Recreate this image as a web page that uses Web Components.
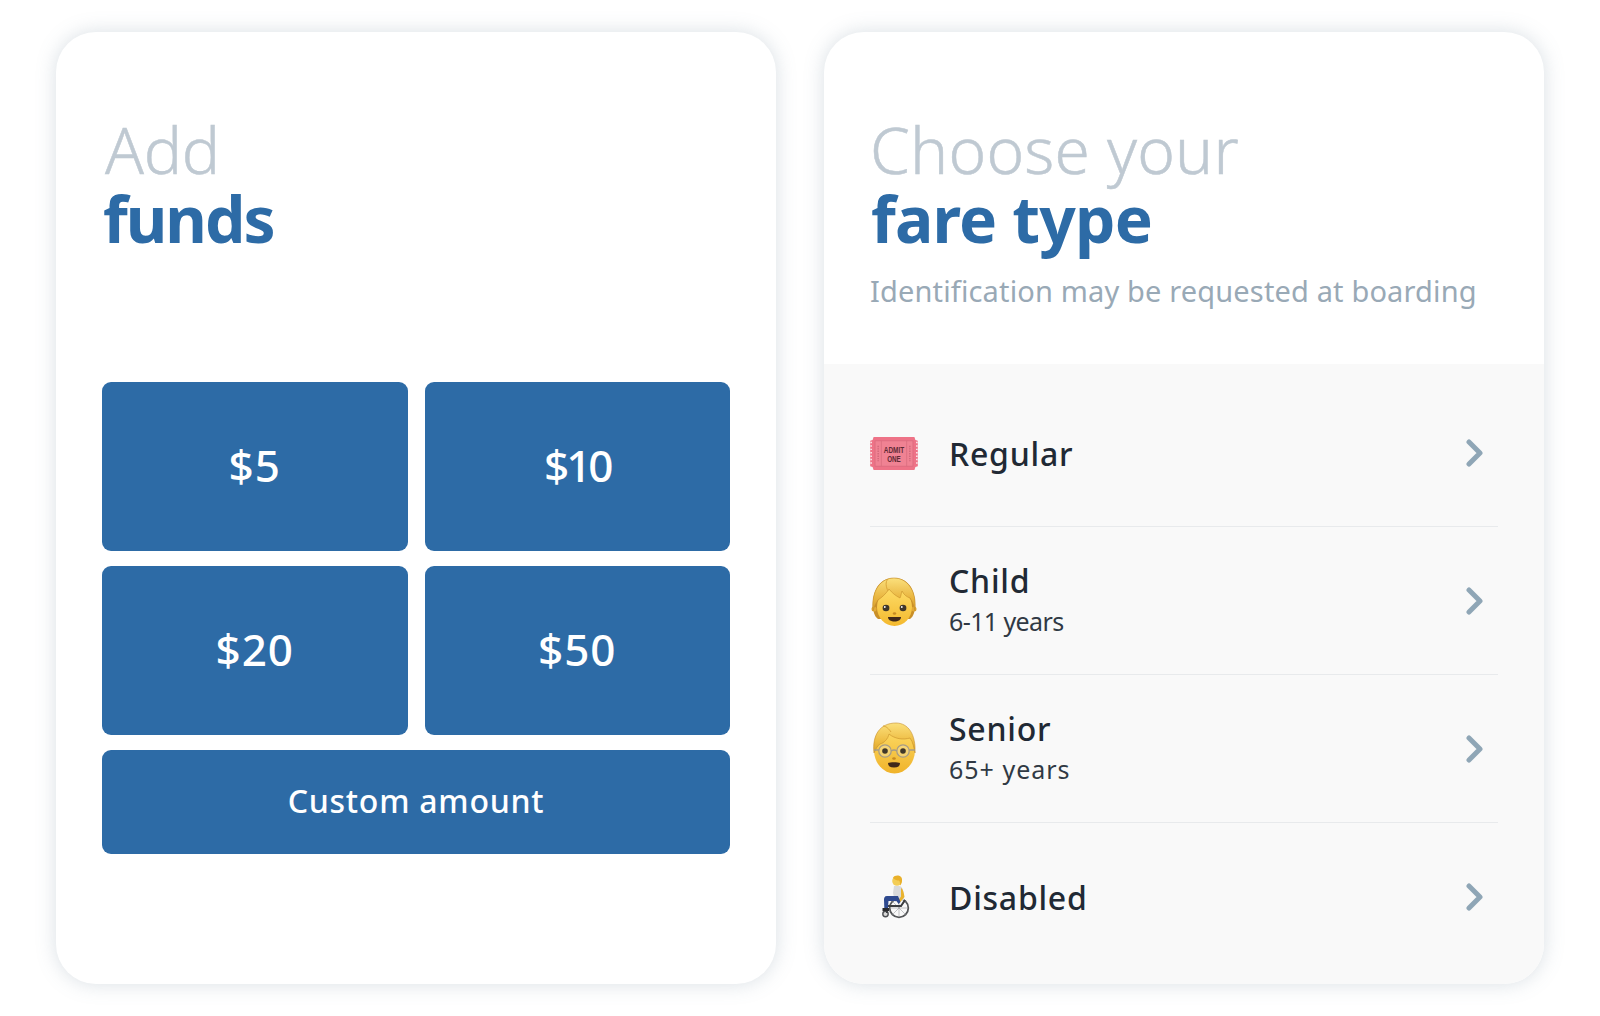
<!DOCTYPE html>
<html><head><meta charset="utf-8"><style>
html,body{margin:0;background:#fff}
body{font-family:"Noto Sans","Open Sans",sans-serif}
</style></head><body>
<fare-app>
<fare-card>
  <fare-title light="Add" bold="funds" lw="-0.2" bw="-2" li="3" bi="1"></fare-title>
  <fund-grid>
    <fund-btn>$5</fund-btn><fund-btn style="letter-spacing:-3px">$10</fund-btn><fund-btn>$20</fund-btn><fund-btn>$50</fund-btn>
    <fund-btn wide>Custom amount</fund-btn>
  </fund-grid>
</fare-card>
<fare-card>
  <fare-title light="Choose your" bold="fare type" sub="Identification may be requested at boarding" lw="0.2" bw="-0.8" bi="1"></fare-title>
  <fare-list>
    <fare-row label="Regular"><fare-icon kind="ticket"></fare-icon></fare-row>
    <fare-row label="Child" sub="6-11 years" subls="-0.6"><fare-icon kind="child"></fare-icon></fare-row>
    <fare-row label="Senior" sub="65+ years" subls="1"><fare-icon kind="senior"></fare-icon></fare-row>
    <fare-row label="Disabled" last><fare-icon kind="chair"></fare-icon></fare-row>
  </fare-list>
</fare-card>
</fare-app>
<script>
function def(name,css,html){
  customElements.define(name,class extends HTMLElement{
    connectedCallback(){
      if(this.shadowRoot)return;
      const r=this.attachShadow({mode:'open'});
      r.innerHTML='<style>'+css+'</style>'+(typeof html==='function'?html(this):html);
    }
  });
}
def('fare-app',':host{display:flex;gap:48px;padding:32px 56px;box-sizing:border-box;width:1600px;height:1016px}','<slot></slot>');
def('fare-card',':host{flex:1;display:flex;flex-direction:column;background:#fff;border-radius:40px;overflow:hidden;box-shadow:0 0 20px rgba(110,130,150,.26)}','<slot></slot>');
def('fare-title',`:host{display:block;box-sizing:border-box;height:332px;padding:83px 46px 0 46px}
.l,.b{font-size:64px;line-height:69px;white-space:nowrap}
.l{font-weight:300;color:#bfc9d2;-webkit-text-stroke:.5px #bfc9d2}
.b{font-weight:700;color:#2d6ba6}
.s{font-size:29px;line-height:40px;color:#99a9b6;margin-top:18px;white-space:nowrap;letter-spacing:.15px}`,
 h=>`<div class="l" style="letter-spacing:${h.getAttribute('lw')||0}px;padding-left:${h.getAttribute('li')||0}px">${h.getAttribute('light')}</div><div class="b" style="letter-spacing:${h.getAttribute('bw')||0}px;padding-left:${h.getAttribute('bi')||0}px">${h.getAttribute('bold')}</div>`+(h.getAttribute('sub')?`<div class="s">${h.getAttribute('sub')}</div>`:''));
def('fund-grid',':host{display:grid;grid-template-columns:305.5px 305.5px;grid-template-rows:169px 169px 104px;gap:15px 17px;padding:18px 46px 0}','<slot></slot>');
def('fund-btn',`:host{display:flex;align-items:center;justify-content:center;background:#2d6ba6;color:#fff;border-radius:9px;font-size:44px;font-weight:500;padding-bottom:3px;box-sizing:border-box;letter-spacing:1px}
:host([wide]){grid-column:1/3;font-size:32px;letter-spacing:.75px}`,'<slot></slot>');
def('fare-list',':host{flex:1;display:block;background:#f9f9f9;padding:15px 46px 0}','<slot></slot>');
def('fare-row',`:host{display:flex;align-items:center;height:147px;border-bottom:1px solid #e8eaec}
:host([last]){border-bottom:0}
.i{width:48px;height:48px;flex:none;margin-right:31px}
.t{flex:1}
.t.two{margin-top:-2px}
.t.one{padding-top:2px}
.n{font-size:32px;line-height:40px;font-weight:500;color:#212934;letter-spacing:.75px}
.u{font-size:25px;line-height:34px;color:#303944;margin-top:3px}
svg.c{flex:none;margin-right:14px}`,
 h=>`<div class="i"><slot></slot></div><div class="t ${h.getAttribute('sub')?'two':'one'}"><div class="n">${h.getAttribute('label')}</div>${h.getAttribute('sub')?`<div class="u" style="letter-spacing:${h.getAttribute('subls')}px">${h.getAttribute('sub')}</div>`:''}</div><svg class="c" width="18" height="28" viewBox="0 0 18 28"><path d="M3 3l11 11L3 25" fill="none" stroke="#8fa6b6" stroke-width="5" stroke-linecap="round" stroke-linejoin="round"/></svg>`);
const ICONS={
ticket:`<svg viewBox="0 0 50 36" width="50" height="35" style="margin:7px 0 0 -1px"><path d="M4 1h42l1 3 2.500 1v26L47 32l-1 3H4l-1-3-2.500-1V5L3 4z" fill="#ee7387"/><path d="M1.500 6v24M48.500 6v24" stroke="#f9f9f9" stroke-width="1.400" stroke-dasharray="1.500 2"/><rect x="5.500" y="5" width="39" height="26" fill="#f08293" stroke="#d56a7c" stroke-width=".7"/><path d="M12 5v26M38 5v26" stroke="#d56a7c" stroke-width=".7"/><path d="M8.700 10v16M41.300 10v16" stroke="#cd6476" stroke-width="1.300" stroke-dasharray="1.500 1"/><text x="25" y="17" text-anchor="middle" font-family="Liberation Sans" font-size="10" font-weight="700" fill="#5f2a35" textLength="21" lengthAdjust="spacingAndGlyphs">ADMIT</text><text x="25" y="27" text-anchor="middle" font-family="Liberation Sans" font-size="10" font-weight="700" fill="#5f2a35" textLength="14" lengthAdjust="spacingAndGlyphs">ONE</text></svg>`,
child:`<svg viewBox="0 0 48 50" width="48" height="50"><defs><linearGradient id="f" x1="0" y1="0" x2="0" y2="1"><stop offset="0" stop-color="#fddc68"/><stop offset="1" stop-color="#f4b92e"/></linearGradient><linearGradient id="fh" x1="0" y1="0" x2="0" y2="1"><stop offset="0" stop-color="#fbe07c"/><stop offset=".6" stop-color="#e9b53f"/><stop offset="1" stop-color="#d29a2c"/></linearGradient></defs><path d="M24 1C11 1 3 11 3 27c0 7 1 12 5 15h32c4-3 5-8 5-15C45 11 37 1 24 1z" fill="#c98f28"/><circle cx="4" cy="32" r="2.500" fill="#e3ab37"/><circle cx="44" cy="32" r="2.500" fill="#e3ab37"/><ellipse cx="24.500" cy="30" rx="17.500" ry="19" fill="url(#f)"/><path d="M3 34C1 13 11 1 24 1s23 12 21 33c-1-4-2-9-5-13-3-1-6-3-8-7-1 3-1 5-2 7-4-2-8-5-11-9-3 5-8 9-11 11-2 3-4 7-5 11z" fill="url(#fh)" stroke="#c68f2a" stroke-width=".6"/><path d="M18 2c-3 3-2 8 0 12" fill="none" stroke="#dba638" stroke-width="1"/><ellipse cx="16" cy="31" rx="3.400" ry="3.300" fill="#40372a"/><ellipse cx="33" cy="31" rx="3.400" ry="3.300" fill="#40372a"/><circle cx="14.800" cy="30" r=".9" fill="#fff"/><circle cx="31.800" cy="30" r=".9" fill="#fff"/><ellipse cx="24.500" cy="36.500" rx="1.700" ry="1.300" fill="#c68a22"/><path d="M18 40h13c0 3-3 4.500-6.500 4.500S18 43 18 40z" fill="#41291a"/></svg>`,
senior:`<svg viewBox="0 0 48 52" width="48" height="52" style="margin-top:-3px"><defs><linearGradient id="g" x1="0" y1="0" x2="0" y2="1"><stop offset="0" stop-color="#fddc68"/><stop offset="1" stop-color="#f0b32a"/></linearGradient><linearGradient id="gh" x1="0" y1="0" x2="0" y2="1"><stop offset="0" stop-color="#fbe07c"/><stop offset=".65" stop-color="#edba3f"/><stop offset="1" stop-color="#d69e2d"/></linearGradient></defs><ellipse cx="24.500" cy="28" rx="20.500" ry="23.500" fill="url(#g)"/><path d="M4 31C2 13 10 1 26 1c12 0 20 11 19 30-1-5-2-11-5-15-7 2-15 1-21-4-1 5-5 9-9 10-3 2-4 5-6 9z" fill="url(#gh)" stroke="#c68f2a" stroke-width=".6"/><path d="M13 4c3 0 6 3 8 6" fill="none" stroke="#dba638" stroke-width="1"/><g fill="#f6e7b5" fill-opacity=".4" stroke="#a79c86" stroke-width="1.300"><circle cx="15" cy="29" r="6.200"/><circle cx="33" cy="29" r="6.200"/></g><path d="M21 29q3-2 6 0M4 28h5M39 28h6" fill="none" stroke="#a79c86" stroke-width="1.300"/><circle cx="15" cy="29" r="2.800" fill="#40372a"/><circle cx="33" cy="29" r="2.800" fill="#40372a"/><ellipse cx="24" cy="36.500" rx="1.800" ry="1.300" fill="#c68a22"/><path d="M18 41c2-1 10-1 12 0 0 3-2 4.500-6 4.500S18 44 18 41z" fill="#41291a"/></svg>`,
chair:`<svg viewBox="0 0 48 48" width="48" height="48"><circle cx="29" cy="35" r="9.300" fill="none" stroke="#555759" stroke-width="1.800"/><path d="M29 26v18M20 35h18M22.500 28.500l13 13M35.500 28.500l-13 13" stroke="#9a9c9f" stroke-width=".6"/><circle cx="15.500" cy="41" r="2.700" fill="#d8d8d8" stroke="#4d4f52" stroke-width="1.400"/><path d="M16 32l1 8M17 33h14l4-6" fill="none" stroke="#3c3e41" stroke-width="2"/><path d="M24 13h5c3 0 4.500 3 4.500 8l.5 6-9 2-2-9z" fill="#d9dadb"/><path d="M31 15c2 1 3 5 3.500 9l-5 6-2-1.500 3.500-5z" fill="#e9b32f"/><path d="M28 23H17c-2.500 0-3 2-3 4l.3 8H18l.5-7h8l2 3 2-2z" fill="#2f4a8f"/><path d="M12.500 35H19v3h-6.500z" fill="#2b2b2e"/><circle cx="27" cy="8" r="4.800" fill="#f3cd56"/><path d="M23 5c2-4 10-3 9 3-.3 2-1 4-2 4.500 0-2 .2-4-1-5-2 0-4-.5-6-2.500z" fill="#e9b02a"/></svg>`};
def('fare-icon',':host{display:block;line-height:0}',h=>ICONS[h.getAttribute('kind')]);
</script></body></html>
